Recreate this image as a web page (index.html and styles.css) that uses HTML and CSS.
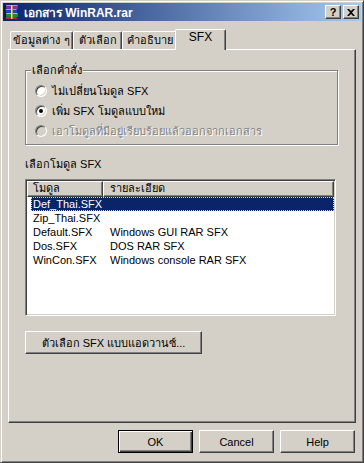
FILE: index.html
```html
<!DOCTYPE html>
<html>
<head>
<meta charset="utf-8">
<title>เอกสาร WinRAR.rar</title>
<link rel="stylesheet" href="styles.css">
</head>
<body>

<div class="window">
	<!-- title bar -->
	<div class="titlebar">
		<svg class="app-icon" width="16" height="16" viewBox="0 0 16 16">
			<path d="M2 1h11l1 1v3H3L2 4z" fill="#8a2a9c"/>
			<path d="M2 1h11l1 1H3z" fill="#d080e0"/>
			<path d="M1 5h11l1 1v3H2L1 8z" fill="#2040c0"/>
			<path d="M1 5h11l1 1H2z" fill="#80a0ff"/>
			<path d="M2 9h11l1 1v3H3L2 12z" fill="#1a8a2a"/>
			<path d="M2 9h11l1 1H3z" fill="#80e080"/>
			<path d="M1 13h11l1 1v1H2L1 14z" fill="#c02828"/>
			<rect x="7" y="1" width="2" height="14" fill="#b89850"/>
			<rect x="7" y="1" width="1" height="14" fill="#f0e0a0"/>
			<path d="M1 2v13" stroke="#101010" stroke-width="1"/>
		</svg>
		<span class="title">เอกสาร WinRAR.rar</span>
		<div class="caption-btns">
			<span class="cap-btn">?</span>
			<span class="cap-btn">
				<svg width="8" height="7" viewBox="0 0 8 7"><path d="M0 0h2l2 2 2-2h2L5 3.5 8 7H6L4 5 2 7H0l3-3.5z" fill="#000"/></svg>
			</span>
		</div>
	</div>

	<div class="client">
		<!-- tabs -->
		<div class="tabs">
			<div class="tab tab1">ข้อมูลต่าง ๆ</div>
			<div class="tab tab2">ตัวเลือก</div>
			<div class="tab tab3">คำอธิบาย</div>
			<div class="tab tab4 active">SFX</div>
		</div>

		<div class="panel">
			<fieldset class="group">
				<legend>เลือกคำสั่ง</legend>
				<div class="radio"><span class="dot"></span>ไม่เปลี่ยนโมดูล SFX</div>
				<div class="radio checked"><span class="dot"></span>เพิ่ม SFX โมดูลแบบใหม่</div>
				<div class="radio disabled"><span class="dot"></span>เอาโมดูลที่มีอยู่เรียบร้อยแล้วออกจากเอกสาร</div>
			</fieldset>

			<div class="list-label">เลือกโมดูล SFX</div>
			<div class="listview">
				<div class="lv-header">
					<span class="hcol1">โมดูล</span>
					<span class="hcol2">รายละเอียด</span>
				</div>
				<div class="lv-row selected"><span class="col1">Def_Thai.SFX</span><span class="col2"></span></div>
				<div class="lv-row"><span class="col1">Zip_Thai.SFX</span><span class="col2"></span></div>
				<div class="lv-row"><span class="col1">Default.SFX</span><span class="col2">Windows GUI RAR SFX</span></div>
				<div class="lv-row"><span class="col1">Dos.SFX</span><span class="col2">DOS RAR SFX</span></div>
				<div class="lv-row"><span class="col1">WinCon.SFX</span><span class="col2">Windows console RAR SFX</span></div>
			</div>

			<button class="btn adv">ตัวเลือก SFX แบบแอดวานซ์...</button>
		</div>

		<div class="footer">
			<button class="btn default">OK</button>
			<button class="btn">Cancel</button>
			<button class="btn">Help</button>
		</div>
	</div>
</div>

</body>
</html>
```

FILE: styles.css
```css
html, body {
	margin: 0;
	padding: 0;
	background: #d4d0c8;
	font-family: "Liberation Sans", "Noto Sans", sans-serif;
	font-size: 11px;
	color: #000;
}

.window {
	box-sizing: border-box;
	width: 364px;
	height: 463px;
	background: #d4d0c8;
	border: 1px solid;
	border-color: #d4d0c8 #404040 #404040 #d4d0c8;
	box-shadow: inset 1px 1px #fff, inset -1px -1px #808080;
	padding: 2px;
	display: flex;
	flex-direction: column;
}

/* title bar */
.titlebar {
	height: 18px;
	display: flex;
	align-items: center;
	background: linear-gradient(to right, #0a246a, #a6caf0);
	color: #fff;
	flex-shrink: 0;
}
.app-icon {
	margin-left: 1px;
	flex-shrink: 0;
}
.title {
	margin-left: 4px;
	font-weight: bold;
	font-size: 12px;
	flex: 1;
	white-space: nowrap;
}
.caption-btns {
	display: flex;
	gap: 2px;
	margin-right: 2px;
}
.cap-btn {
	box-sizing: border-box;
	width: 16px;
	height: 14px;
	background: #d4d0c8;
	border: 1px solid;
	border-color: #fff #404040 #404040 #fff;
	box-shadow: inset -1px -1px #808080;
	color: #000;
	font-weight: bold;
	font-size: 11px;
	line-height: 11px;
	display: flex;
	align-items: center;
	justify-content: center;
}

/* client */
.client {
	flex: 1;
	padding: 8px 5px 0 5px;
	display: flex;
	flex-direction: column;
}

.tabs {
	display: flex;
	align-items: flex-end;
	padding-left: 2px;
	height: 20px;
}
.tab {
	box-sizing: border-box;
	height: 18px;
	border: 1px solid;
	border-bottom: 0;
	border-color: #fff #404040 #fff #fff;
	box-shadow: inset -1px 0 #808080;
	border-radius: 2px 2px 0 0;
	text-align: center;
	line-height: 17px;
	white-space: nowrap;
}
.tab1 { width: 63px; }
.tab2 { width: 49px; }
.tab3 { width: 55px; }
.tab4 { width: 47px; }
.tab.active {
	width: 51px;
	height: 21px;
	margin: 0 -2px -1px -2px;
	background: #d4d0c8;
	position: relative;
	font-size: 12px;
	line-height: 15px;
}

.panel {
	box-sizing: border-box;
	width: 348px;
	height: 374px;
	border: 1px solid;
	border-color: #fff #404040 #404040 #fff;
	box-shadow: inset -1px -1px #808080;
	padding: 14px 0 0 16px;
}

/* group box */
.group {
	box-sizing: border-box;
	width: 313px;
	margin: 0;
	padding: 0 0 3px 9px;
	border: 1px solid #808080;
	box-shadow: inset 1px 1px #fff, 1px 1px #fff;
}
.group legend {
	margin-left: -4px;
	padding: 0 1px;
	line-height: 13px;
	background: #d4d0c8;
}
.radio {
	height: 20px;
	display: flex;
	align-items: center;
	white-space: nowrap;
}
.radio:first-of-type {
	margin-top: 4px;
}
.dot {
	box-sizing: border-box;
	width: 12px;
	height: 12px;
	border-radius: 50%;
	border: 1px solid;
	border-color: #808080 #fff #fff #808080;
	box-shadow: inset 1px 1px #404040, inset -1px -1px #d4d0c8;
	background: #fff;
	margin-right: 5px;
	display: flex;
	align-items: center;
	justify-content: center;
}
.radio.checked .dot::after {
	content: "";
	width: 4px;
	height: 4px;
	border-radius: 50%;
	background: #000;
}
.radio.disabled {
	color: #808080;
	text-shadow: 1px 1px #fff;
}
.radio.disabled .dot {
	background: #d4d0c8;
}

.list-label {
	margin-top: 13px;
	line-height: 13px;
	height: 13px;
}

/* list view */
.listview {
	box-sizing: border-box;
	width: 311px;
	height: 137px;
	margin-top: 8px;
	background: #fff;
	border: 1px solid;
	border-color: #808080 #fff #fff #808080;
	box-shadow: inset 1px 1px #404040, inset -1px -1px #d4d0c8;
	padding: 1px;
}
.lv-header {
	display: flex;
	height: 16px;
}
.lv-header span {
	box-sizing: border-box;
	height: 16px;
	background: #d4d0c8;
	border: 1px solid;
	border-color: #fff #404040 #404040 #fff;
	box-shadow: inset -1px -1px #808080;
	line-height: 13px;
}
.hcol1 {
	width: 76px;
	padding-left: 5px;
}
.hcol2 {
	flex: 1;
	padding-left: 6px;
}
.lv-row {
	display: flex;
	height: 14px;
	line-height: 14px;
	margin-left: 4px;
	white-space: nowrap;
}
.lv-row .col1 {
	width: 72px;
	padding-left: 2px;
	box-sizing: border-box;
}
.lv-row .col2 {
	padding-left: 7px;
}
.lv-row.selected {
	background: #0a246a;
	color: #fff;
	outline: 1px dotted #f0d890;
	outline-offset: -1px;
}

/* buttons */
.btn {
	box-sizing: border-box;
	height: 23px;
	background: #d4d0c8;
	border: 1px solid;
	border-color: #fff #404040 #404040 #fff;
	box-shadow: inset -1px -1px #808080;
	font-family: inherit;
	font-size: 11px;
	color: #000;
	padding: 0;
}
.btn.adv {
	display: block;
	width: 177px;
	margin-top: 15px;
}
.footer {
	display: flex;
	justify-content: flex-end;
	gap: 6px;
	margin-top: 7px;
	padding-right: 1px;
}
.footer .btn {
	width: 75px;
}
.btn.default {
	border: 1px solid #000;
	box-shadow: inset 1px 1px #fff, inset -1px -1px #404040, inset -2px -2px #808080;
}
```
